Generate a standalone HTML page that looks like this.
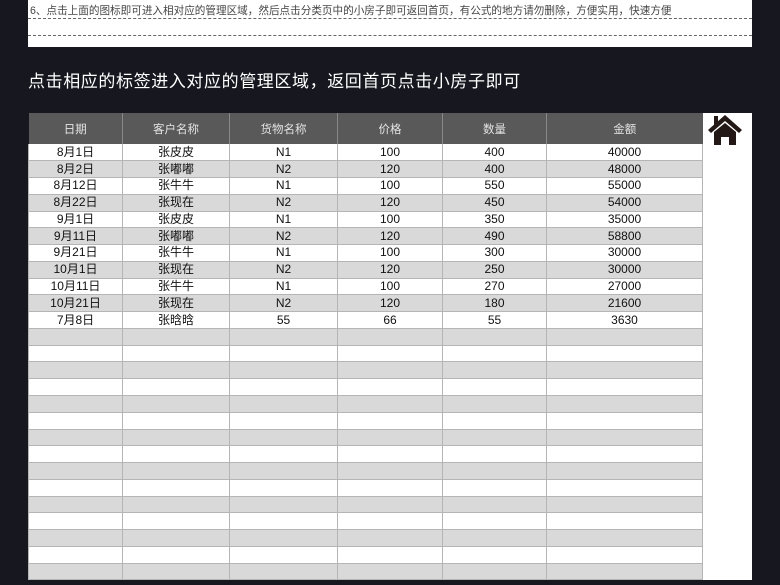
<!DOCTYPE html>
<html><head><meta charset="utf-8"><style>
*{margin:0;padding:0;box-sizing:border-box}
body{width:780px;height:585px;background:#16171f;position:relative;overflow:hidden;font-family:"Liberation Sans","Noto Sans CJK SC",sans-serif}
.top{position:absolute;left:28px;top:0;width:724px;height:47px;background:#fff}
.top .l1{position:absolute;left:0;top:0;width:100%;height:19px;border-bottom:1px dashed #666;font-size:10.6px;color:#444;padding:3px 0 0 2px;white-space:nowrap}
.top .l2{position:absolute;left:0;top:35px;width:100%;border-top:1px dashed #666}
h1{position:absolute;left:28px;top:67px;font-size:17px;font-weight:normal;color:#fff;letter-spacing:0.6px;white-space:nowrap}
table{position:absolute;left:28px;top:113px;border-collapse:collapse;table-layout:fixed}
th{background:#595959;color:#e4e4e4;font-weight:normal;font-size:11.5px;height:31px;border-left:1px solid #888}
th:first-child{border-left:none}
td{height:16.77px;font-size:12px;color:#111;text-align:center;border:1px solid #b5b5b5;border-top:none;padding:0;line-height:15px}
tr:nth-child(even) td{background:#d9d9d9}
tr:nth-child(odd) td{background:#fff}
.side{position:absolute;left:702px;top:113px;width:50px;height:467px;background:#fff}
</style></head><body>
<div class="top"><div class="l1">6、点击上面的图标即可进入相对应的管理区域，然后点击分类页中的小房子即可返回首页，有公式的地方请勿删除，方便实用，快速方便</div><div class="l2"></div></div>
<h1>点击相应的标签进入对应的管理区域，返回首页点击小房子即可</h1>
<div class="side"><svg width="34" height="31" viewBox="0 0 34 31" style="position:absolute;left:6px;top:1px"><path d="M17 1 L0 16 L3 19 L17 7 L31 19 L34 16 Z" fill="#231815"/><rect x="6" y="2" width="4" height="9" fill="#231815"/><path d="M6 18 L17 9 L28 18 L28 31 L21 31 L21 23 L13 23 L13 31 L6 31 Z" fill="#231815"/></svg></div>
<table>
<colgroup><col style="width:94px"><col style="width:107px"><col style="width:108px"><col style="width:105px"><col style="width:104px"><col style="width:156px"></colgroup>
<thead><tr><th>日期</th><th>客户名称</th><th>货物名称</th><th>价格</th><th>数量</th><th>金额</th></tr></thead>
<tbody>
<tr><td>8月1日</td><td>张皮皮</td><td>N1</td><td>100</td><td>400</td><td>40000</td></tr>
<tr><td>8月2日</td><td>张嘟嘟</td><td>N2</td><td>120</td><td>400</td><td>48000</td></tr>
<tr><td>8月12日</td><td>张牛牛</td><td>N1</td><td>100</td><td>550</td><td>55000</td></tr>
<tr><td>8月22日</td><td>张现在</td><td>N2</td><td>120</td><td>450</td><td>54000</td></tr>
<tr><td>9月1日</td><td>张皮皮</td><td>N1</td><td>100</td><td>350</td><td>35000</td></tr>
<tr><td>9月11日</td><td>张嘟嘟</td><td>N2</td><td>120</td><td>490</td><td>58800</td></tr>
<tr><td>9月21日</td><td>张牛牛</td><td>N1</td><td>100</td><td>300</td><td>30000</td></tr>
<tr><td>10月1日</td><td>张现在</td><td>N2</td><td>120</td><td>250</td><td>30000</td></tr>
<tr><td>10月11日</td><td>张牛牛</td><td>N1</td><td>100</td><td>270</td><td>27000</td></tr>
<tr><td>10月21日</td><td>张现在</td><td>N2</td><td>120</td><td>180</td><td>21600</td></tr>
<tr><td>7月8日</td><td>张晗晗</td><td>55</td><td>66</td><td>55</td><td>3630</td></tr>
<tr><td></td><td></td><td></td><td></td><td></td><td></td></tr>
<tr><td></td><td></td><td></td><td></td><td></td><td></td></tr>
<tr><td></td><td></td><td></td><td></td><td></td><td></td></tr>
<tr><td></td><td></td><td></td><td></td><td></td><td></td></tr>
<tr><td></td><td></td><td></td><td></td><td></td><td></td></tr>
<tr><td></td><td></td><td></td><td></td><td></td><td></td></tr>
<tr><td></td><td></td><td></td><td></td><td></td><td></td></tr>
<tr><td></td><td></td><td></td><td></td><td></td><td></td></tr>
<tr><td></td><td></td><td></td><td></td><td></td><td></td></tr>
<tr><td></td><td></td><td></td><td></td><td></td><td></td></tr>
<tr><td></td><td></td><td></td><td></td><td></td><td></td></tr>
<tr><td></td><td></td><td></td><td></td><td></td><td></td></tr>
<tr><td></td><td></td><td></td><td></td><td></td><td></td></tr>
<tr><td></td><td></td><td></td><td></td><td></td><td></td></tr>
<tr><td></td><td></td><td></td><td></td><td></td><td></td></tr>
</tbody></table>
</body></html>
